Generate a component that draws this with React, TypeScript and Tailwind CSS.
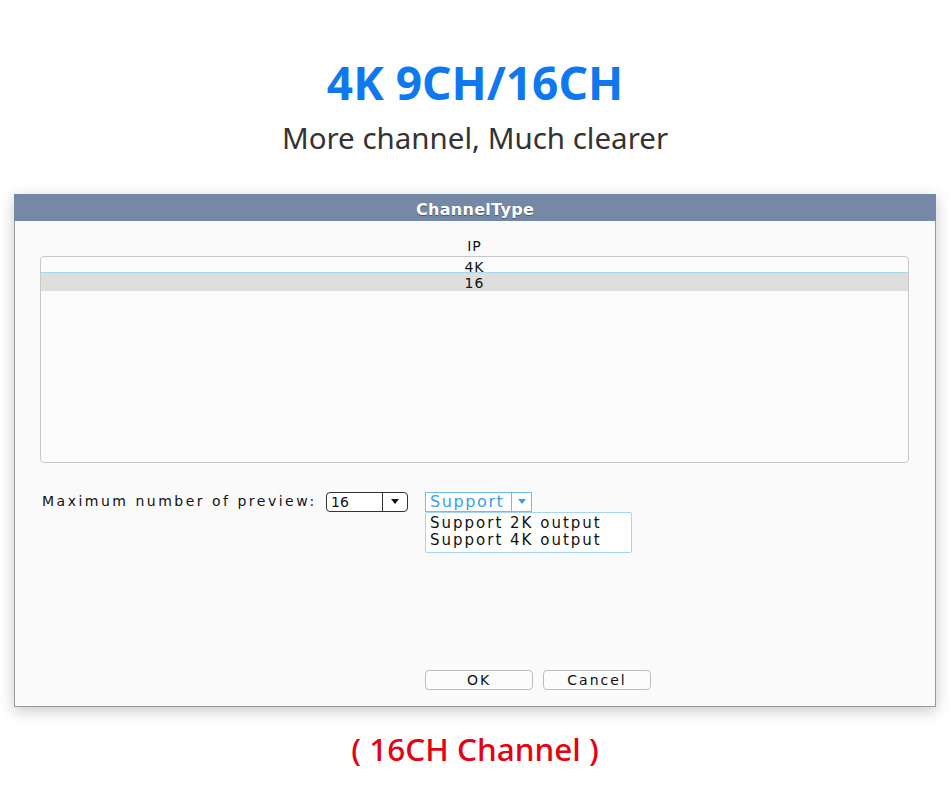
import React from 'react';

const dlgFont = { fontFamily: '"DejaVu Sans", Verdana, sans-serif' };

const Caret = ({ className }: { className: string }) => (
  <svg width="8" height="5" viewBox="0 0 8 5" className={className}>
    <path d="M0 0 H8 L4 5 Z" fill="currentColor" />
  </svg>
);

const Dialog: React.FC = () => {
  return (
    <div className="mx-[14px] h-[513px] flex flex-col bg-[#fafafa] border-x border-b border-[#9a9a9a] shadow-[0_4px_14px_rgba(0,0,0,0.22)]" style={dlgFont}>
      {/* Title bar */}
      <div className="h-[27px] -mx-px bg-[#7589a6] flex items-center justify-center pt-[4px]">
        <span className="text-white font-bold text-[16px] tracking-[0.3px] [text-shadow:0_1px_1px_rgba(0,0,0,0.4)]">ChannelType</span>
      </div>

      <div className="flex-1 flex flex-col pl-[25px] pr-[26px]">
        <div className="h-[35px] pt-[17px] text-center text-[14px] leading-[17px] text-[#111] tracking-[1px]">IP</div>

        {/* Channel list */}
        <div className="h-[207px] border border-[#c8c8c8] rounded-[4px] bg-[#fcfcfc] text-center text-[14px] text-[#111] tracking-[1px]">
          <div className="h-[16px] leading-[20px] border-b border-[#a9d7ea]">4K</div>
          <div className="h-[18px] leading-[20px] bg-[#dedede]">16</div>
        </div>

        {/* Preview settings */}
        <div className="mt-[28px] h-[21px] flex items-center">
          <span className="ml-[2px] w-[284px] text-[14px] text-[#111] tracking-[2.5px] whitespace-nowrap">Maximum number of preview:</span>

          <div className="w-[82px] h-[20px] flex border border-[#333] rounded-[4px] bg-white text-[14px] text-[#111]">
            <span className="flex-1 pl-[4px] leading-[18px]">16</span>
            <span className="w-[25px] border-l border-[#333] flex items-center justify-center">
              <Caret className="text-[#111]" />
            </span>
          </div>

          <div className="relative ml-[17px] w-[107px] h-[20px] flex border border-[#6cbdf0] bg-white text-[16px] text-[#36a1e6]">
            <span className="flex-1 pl-[4px] leading-[18px] tracking-[1.6px]">Support</span>
            <span className="w-[20px] border-l border-[#6cbdf0] flex items-center justify-center">
              <Caret className="text-[#36a1e6]" />
            </span>
            {/* Open option menu */}
            <div className="absolute left-[-1px] top-[19px] w-[207px] h-[41px] border border-[#a6d5f2] rounded-[2px] bg-white pl-[4px] pt-[2px] text-[15px] leading-[17px] text-[#111] tracking-[2px] whitespace-nowrap">
              <div>Support 2K output</div>
              <div>Support 4K output</div>
            </div>
          </div>
        </div>

        <div className="flex-1" />

        {/* Buttons */}
        <div className="mb-[16px] h-[20px] flex gap-[10px] pl-[385px]">
          <button className="w-[108px] h-[20px] border border-[#bdbdbd] rounded-[4px] bg-[#fcfcfc] text-[14px] leading-[18px] text-[#111] tracking-[2px]">OK</button>
          <button className="w-[108px] h-[20px] border border-[#bdbdbd] rounded-[4px] bg-[#fcfcfc] text-[14px] leading-[18px] text-[#111] tracking-[2px]">Cancel</button>
        </div>
      </div>
    </div>
  );
};

const App: React.FC = () => {
  return (
    <div className="w-[950px] h-[794px] bg-white overflow-hidden" style={{ fontFamily: '"Noto Sans", sans-serif' }}>
      <h1 className="mt-[52px] text-center text-[46px] leading-[60px] font-bold text-[#0f78ef]">4K 9CH/16CH</h1>
      <p className="mt-[6px] text-center text-[29.5px] leading-[40px] text-[#333]">More channel, Much clearer</p>

      <div className="mt-[36px]">
        <Dialog />
      </div>

      <p className="mt-[22px] text-center text-[31.5px] leading-[40px] font-medium text-[#e60012]">( 16CH Channel )</p>
    </div>
  );
};

export default App;
